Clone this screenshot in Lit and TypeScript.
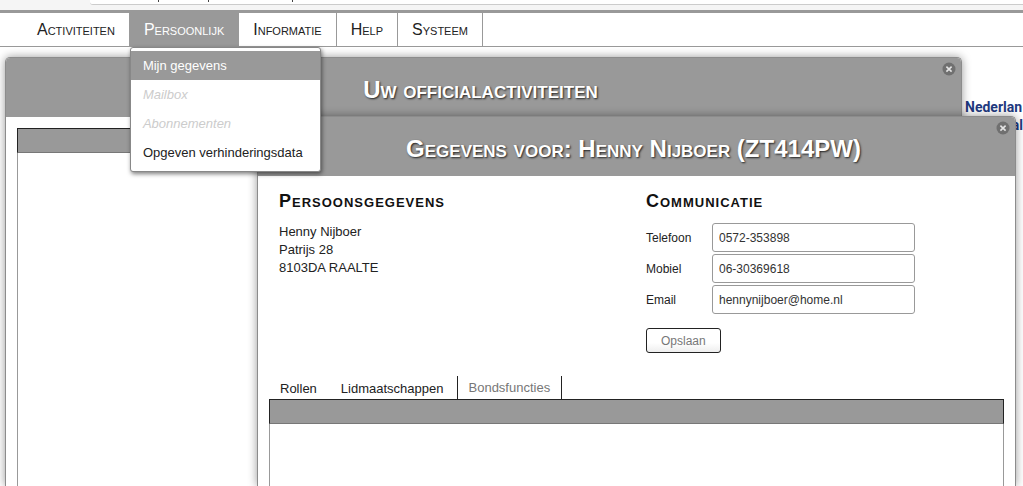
import { LitElement, html, css } from "lit";
import { customElement, property } from "lit/decorators.js";
import { classMap } from "lit/directives/class-map.js";

@customElement("desk-window")
class DeskWindow extends LitElement {
  @property() heading = "";

  static styles = css`
    :host {
      display: flex;
      flex-direction: column;
      box-sizing: border-box;
      background: #fff;
      border: 1px solid #8c8c8c;
      border-bottom: 0;
      border-radius: 5px 5px 0 0;
      box-shadow: 0 0 10px rgba(0, 0, 0, 0.4);
    }
    .bar {
      position: relative;
      display: flex;
      align-items: center;
      justify-content: center;
      height: 59px;
      padding: 4px 6px 0 0;
      box-sizing: border-box;
      background: #999;
      border-radius: 4px 4px 0 0;
    }
    .title {
      margin: 0;
      font-size: 24px;
      line-height: 28px;
      font-weight: bold;
      font-variant: small-caps;
      color: #fff;
      text-shadow: 1px 1px 2px #222;
      white-space: nowrap;
    }
    .close {
      position: absolute;
      top: 4px;
      right: 5px;
      width: 14px;
      height: 14px;
      padding: 0;
      border: 0;
      background: none;
    }
    .close svg {
      display: block;
    }
  `;

  render() {
    return html`
      <header class="bar">
        <h1 class="title">${this.heading}</h1>
        <button class="close" aria-label="Sluiten">
          <svg width="14" height="14" viewBox="0 0 14 14">
            <circle cx="7" cy="7" r="6.5" fill="#707070" />
            <path d="M4.4 4.6l5.2 5M9.6 4.6L4.4 9.6" stroke="#e4e4e4" stroke-width="1.6" />
          </svg>
        </button>
      </header>
      <slot></slot>
    `;
  }
}

@customElement("app-root")
class AppRoot extends LitElement {
  private nav = ["Activiteiten", "Persoonlijk", "Informatie", "Help", "Systeem"];
  private menu = [
    { label: "Mijn gegevens", state: "current" },
    { label: "Mailbox", state: "off" },
    { label: "Abonnementen", state: "off" },
    { label: "Opgeven verhinderingsdata", state: "" },
  ];
  private fields = [
    { id: "telefoon", label: "Telefoon", value: "0572-353898" },
    { id: "mobiel", label: "Mobiel", value: "06-30369618" },
    { id: "email", label: "Email", value: "hennynijboer@home.nl" },
  ];
  private tabs = ["Rollen", "Lidmaatschappen", "Bondsfuncties"];

  static styles = css`
    :host {
      display: flex;
      flex-direction: column;
      height: 100vh;
      overflow: hidden;
      background: #fff;
      font-family: "Liberation Sans", Arial, sans-serif;
      font-size: 13px;
      color: #222;
    }
    .chrome {
      height: 10px;
      flex: none;
      padding-left: 90px;
      background: #f5f5f5;
      border-bottom: 3px solid #999;
    }
    .address {
      height: 4px;
      background: #fff;
      border-bottom: 1px solid #ccc;
      border-bottom-left-radius: 3px;
    }
    .address svg {
      display: block;
    }
    .nav {
      display: flex;
      flex: none;
      height: 33px;
      padding-left: 23px;
      border-bottom: 1px solid #999;
    }
    .item {
      position: relative;
      border-right: 1px solid #999;
    }
    .link {
      display: block;
      padding: 0 14px;
      font-size: 16px;
      line-height: 34px;
      height: 33px;
      font-variant: small-caps;
      color: #222;
      text-decoration: none;
    }
    .open {
      background: #999;
      color: #fff;
    }
    .menu {
      position: absolute;
      z-index: 5;
      top: 34px;
      left: 0;
      min-width: 189px;
      margin: 0;
      padding: 3px 0 4px;
      list-style: none;
      background: #fff;
      border: 1px solid #888;
      border-radius: 3px;
      box-shadow: 1px 2px 4px rgba(0, 0, 0, 0.5);
    }
    .entry {
      display: block;
      padding: 0 12px;
      font-size: 13px;
      line-height: 29px;
      color: #222;
      text-decoration: none;
      white-space: nowrap;
    }
    .current {
      background: #999;
      color: #fff;
    }
    .off {
      color: #ccc;
      font-style: italic;
    }
    .desk {
      position: relative;
      flex: 1;
      overflow: hidden;
    }
    .logo {
      position: absolute;
      top: 51px;
      right: 0;
      width: 58px;
      font-family: Roboto, "Open Sans", sans-serif;
      font-size: 14px;
      line-height: 18px;
      font-weight: bold;
      color: #1f3a80;
      white-space: nowrap;
    }
    .logo-end {
      display: block;
      text-align: right;
    }
    .back {
      position: absolute;
      top: 10px;
      bottom: 0;
      left: 5px;
      right: 61px;
    }
    .front {
      position: absolute;
      top: 69px;
      bottom: 0;
      left: 257px;
      right: 7px;
    }
    .grid {
      flex: 1;
      margin: 0 11px;
      border: solid #999;
      border-width: 0 1px;
    }
    .grid-head {
      height: 23px;
      margin: 0 -1px;
      background: #999;
      border: 1px solid #222;
      border-bottom-color: #777;
    }
    .back .grid {
      margin-top: 11px;
    }
    .person {
      display: grid;
      grid-template-columns: 367px 1fr;
      padding: 11px 21px 0;
    }
    .sub {
      margin: 0;
      font-size: 18px;
      line-height: 28px;
      font-weight: bold;
      font-variant: small-caps;
      letter-spacing: 1px;
      color: #111;
    }
    .lines {
      margin: 8px 0 0;
      font-size: 13px;
      line-height: 18px;
    }
    .form {
      display: grid;
      grid-template-columns: 66px 203px;
      row-gap: 2px;
      align-items: center;
      margin-top: 8px;
    }
    .label {
      font-size: 12px;
    }
    .input {
      box-sizing: border-box;
      width: 100%;
      height: 29px;
      padding: 0 6px;
      border: 1px solid #999;
      border-radius: 3px;
      background: #fff;
      font: 12px "Liberation Sans", Arial, sans-serif;
      color: #333;
    }
    .save {
      height: 25px;
      margin-top: 14px;
      padding: 0 14px;
      border: 1px solid #222;
      border-radius: 3px;
      background: linear-gradient(#fff 60%, #eee);
      font: 12px "Liberation Sans", Arial, sans-serif;
      color: #777;
    }
    .tabs {
      display: flex;
      gap: 2px;
      margin: 23px 11px 0;
    }
    .tab {
      height: 23px;
      padding: 2px 11px 0;
      border: 0;
      background: none;
      font: 13px "Liberation Sans", Arial, sans-serif;
      color: #222;
    }
    .tab-on {
      padding: 0 11px;
      border: solid #222;
      border-width: 0 1px;
      color: #777;
    }
  `;

  render() {
    return html`
      <div class="chrome">
        <div class="address">
          <svg width="220" height="4" viewBox="0 0 220 4">
            <path d="M68.5 0v2M118.5 0v2M202.5 0v2" stroke="#444" />
          </svg>
        </div>
      </div>
      <nav class="nav">
        ${this.nav.map(
          (name) => html`<div class="item">
            <a href="#" class=${classMap({ link: true, open: name === "Persoonlijk" })}>${name}</a>
            ${name === "Persoonlijk"
              ? html`<ul class="menu">
                  ${this.menu.map(
                    (m) => html`<li>
                      <a
                        href="#"
                        class=${classMap({ entry: true, current: m.state === "current", off: m.state === "off" })}
                        >${m.label}</a
                      >
                    </li>`
                  )}
                </ul>`
              : ""}
          </div>`
        )}
      </nav>
      <main class="desk">
        <div class="logo">Nederlan<span class="logo-end">al</span></div>
        <desk-window class="back" heading="Uw officialactiviteiten">
          <div class="grid"><div class="grid-head"></div></div>
        </desk-window>
        <desk-window class="front" heading="Gegevens voor: Henny Nijboer (ZT414PW)">
          <div class="person">
            <section>
              <h2 class="sub">Persoonsgegevens</h2>
              <p class="lines">Henny Nijboer<br />Patrijs 28<br />8103DA RAALTE</p>
            </section>
            <section>
              <h2 class="sub">Communicatie</h2>
              <div class="form">
                ${this.fields.map(
                  (f) => html`<label class="label" for=${f.id}>${f.label}</label>
                    <input class="input" id=${f.id} .value=${f.value} />`
                )}
              </div>
              <button class="save">Opslaan</button>
            </section>
          </div>
          <div class="tabs" role="tablist">
            ${this.tabs.map(
              (t) => html`<button
                role="tab"
                class=${classMap({ tab: true, "tab-on": t === "Bondsfuncties" })}
              >${t}</button>`
            )}
          </div>
          <div class="grid"><div class="grid-head"></div></div>
        </desk-window>
      </main>
    `;
  }
}
